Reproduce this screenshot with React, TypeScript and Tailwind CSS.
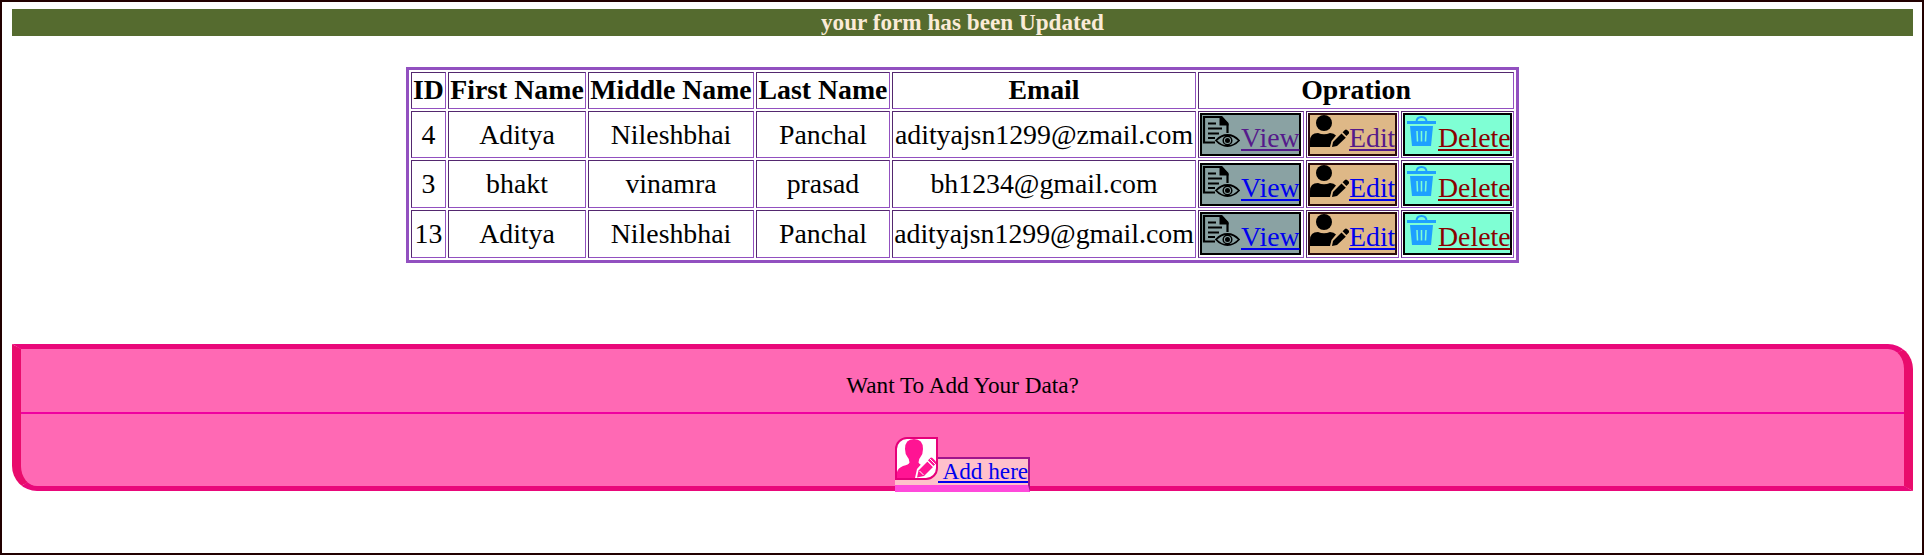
import React from "react";

type Row = { id: number; first: string; middle: string; last: string; email: string; visited: boolean };

const rows: Row[] = [
  { id: 4, first: "Aditya", middle: "Nileshbhai", last: "Panchal", email: "adityajsn1299@zmail.com", visited: true },
  { id: 3, first: "bhakt", middle: "vinamra", last: "prasad", email: "bh1234@gmail.com", visited: false },
  { id: 13, first: "Aditya", middle: "Nileshbhai", last: "Panchal", email: "adityajsn1299@gmail.com", visited: false },
];

const heights = ["h-[47px]", "h-[48px]", "h-[48px]"];
const tops = ["pt-[1px]", "pt-[2px]", "pt-[1px]"];

const edge = "border border-t-[#54286f] border-l-[#54286f] border-r-[#9250c0] border-b-[#9250c0]";

function ViewIcon() {
  return (
    <svg className="h-[32px] w-[38px] shrink-0" viewBox="0 0 38 32" fill="none" stroke="#000">
      <path d="M13 27.500H2V2h17L25.500 9.500V18" strokeWidth="2.200" />
      <path d="M17.500 1H20l6.500 7v2.500h-9z" fill="#000" stroke="none" />
      <path d="M6 8.500h8M6 13.500h14M6 18.500h11M6 23h7" strokeWidth="2" />
      <path d="M14 25.500q5-5.500 11.500-5.500t11.500 5.500q-5 5.500-11.500 5.500T14 25.500z" strokeWidth="1.800" />
      <circle cx="25.500" cy="25.500" r="4.300" strokeWidth="1.500" />
      <circle cx="25.500" cy="25.500" r="2.500" fill="#000" stroke="none" />
    </svg>
  );
}

function EditIcon() {
  return (
    <svg className="h-[33px] w-[39px] shrink-0" viewBox="0 0 39 33" fill="#000">
      <circle cx="14" cy="8" r="8" />
      <path d="M0 32v-6q0-8 8-8 6 2.500 12 0 4 0 6 2.500L21.500 26 20 32z" />
      <path d="M22 32l1-5 8.500-8.500 4.300 4.300L27 31z" />
      <path d="M32.600 17.300l2.300-2.400q1-1 2.200 0l1.600 1.600q1 1 0 2.200l-2.300 2.400z" />
    </svg>
  );
}

function TrashIcon() {
  return (
    <svg className="mt-[1px] h-[31px] w-[29px] shrink-0" viewBox="0 0 29 31" fill="#1ea0ff">
      <path d="M9.500 6q0-5 5-5t5 5" fill="none" stroke="#1ea0ff" strokeWidth="2" />
      <rect y="5" width="29" height="3" />
      <path d="M3 10h23l-2 20H5z" />
      <path d="M10 15l.5 10.500M14.500 15v10.500M19 15l-.5 10.500" stroke="#7fffd4" strokeWidth="1.500" />
    </svg>
  );
}

function AddUserIcon() {
  return (
    <svg className="block h-[39px] w-[39px]" viewBox="0 0 39 39">
      <path d="M8 10Q8 0 17 0t9 10q0 5-2.500 8-2 2-2 5.500 1 2.500 8.500 4.500L19 39H0v-6q1-4 6-6 6-1.500 6.500-3.500 0-3.500-2-5.500Q8 15 8 10z" fill="#ff1493" />
      <path d="M18 39l2-9L31 17.500l9 9L28 39z" fill="#fff" />
      <path d="M20 38.500l1.500-7 9-9 5.500 5.500-9 9z" fill="#ff1493" />
      <path d="M31 21.500l2-2.500q1.500-1 2.500 0l3.500 3.500v2L36.500 27z" fill="#ff1493" />
      <path d="M30.500 22l6 6M32.500 19.500l6 6M22.500 32l4 4" stroke="#fff" strokeWidth="1" />
    </svg>
  );
}

export default function App() {
  return (
    <div className="flex h-[555px] w-[1924px] flex-col overflow-hidden border-2 border-[#220000] bg-white pt-[7px] pr-[9px] pl-[10px] font-['Liberation_Serif',serif] text-black">
      <div className="h-[27px] shrink-0 bg-[#556b2f] text-center text-[23.2px] leading-[27px] font-bold text-[#faebd7]">
        your form has been Updated
      </div>

      <table className="mt-[31px] ml-[394px] h-[196px] w-[1113px] table-fixed border-separate border-spacing-[2px] border-[3px] border-[#9250c0] text-center text-[27.8px] leading-[32px] whitespace-nowrap">
        <colgroup>
          <col className="w-[35px]" />
          <col className="w-[138px]" />
          <col className="w-[166px]" />
          <col className="w-[134px]" />
          <col className="w-[304px]" />
          <col className="w-[106px]" />
          <col className="w-[93px]" />
          <col className="w-[113px]" />
        </colgroup>
        <thead>
          <tr className="h-[37px]">
            {["ID", "First Name", "Middle Name", "Last Name", "Email"].map((h) => (
              <th key={h} className={`${edge} p-0 pb-[2px]`}>{h}</th>
            ))}
            <th colSpan={3} className={`${edge} p-0 pb-[2px]`}>Opration</th>
          </tr>
        </thead>
        <tbody>
          {rows.map((r, i) => {
            const link = r.visited ? "text-[#551a8b]" : "text-[#0000ee]";
            return (
              <tr key={r.id} className={heights[i]}>
                {[r.id, r.first, r.middle, r.last, r.email].map((v, k) => (
                  <td key={k} className={`${edge} p-0`}>{v}</td>
                ))}
                <td className={`${edge} px-[1px] pb-0 align-top ${tops[i]}`}>
                  <div className="flex h-[43px] w-[101px] border-2 border-black bg-[#8aa2a3]">
                    <ViewIcon />
                    <a href="#" className={`mt-[7px] ml-[1px] h-[32px] leading-[32px] underline decoration-2 underline-offset-2 ${link}`}>View</a>
                  </div>
                </td>
                <td className={`${edge} px-[1px] pb-0 align-top ${tops[i]}`}>
                  <div className="flex h-[43px] w-[89px] border-2 border-[#2b0a0a] bg-[#deb887]">
                    <EditIcon />
                    <a href="#" className={`mt-[7px] h-[32px] leading-[32px] underline decoration-2 underline-offset-2 ${link}`}>Edit</a>
                  </div>
                </td>
                <td className={`${edge} px-[1px] pb-0 align-top ${tops[i]}`}>
                  <div className="flex h-[43px] w-[109px] border-2 border-black bg-[#7fffd4] pl-[2px]">
                    <TrashIcon />
                    <a href="#" className="mt-[7px] ml-[2px] h-[32px] leading-[32px] text-[#8b0000] underline decoration-2 underline-offset-2">Delete</a>
                  </div>
                </td>
              </tr>
            );
          })}
        </tbody>
      </table>

      <div className="mt-[81px] flex h-[147px] shrink-0 flex-col items-center rounded-tr-[25px] rounded-bl-[25px] border-x-[9px] border-y-[5px] border-x-[#e90c6c] border-y-[#e9087a] bg-[#ff69b4] text-[23.2px]">
        <p className="mt-[23px] h-[27px] leading-[27px]">Want To Add Your Data?</p>
        <div className="mt-[13px] h-[2px] w-full shrink-0 bg-[#f000a0]" />
        <div className="mt-[23px] flex h-[55px] shrink-0 items-start">
          <div className="relative z-10 -mr-[43px] h-[43px] w-[43px] shrink-0 overflow-hidden rounded-tl-[12px] rounded-br-[12px] border-2 border-[#e6007a] bg-white">
            <AddUserIcon />
          </div>
          <a
            href="#"
            className="mt-[20px] h-[35px] w-[135px] border-t-2 border-r-2 border-b-[7px] border-t-[#a0148c] border-r-[#a0148c] border-b-[#ff4adb] bg-[#ffc0cb] pl-[43px] leading-[25px] whitespace-pre text-[#0000ee] underline decoration-2 underline-offset-2"
          >
            {" Add here"}
          </a>
        </div>
      </div>
    </div>
  );
}
